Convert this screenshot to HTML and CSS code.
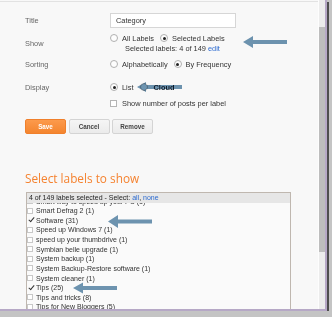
FILE: index.html
```html
<!DOCTYPE html>
<html lang="en">
<head>
  <meta charset="UTF-8" />
  <title>Labels gadget settings</title>
  <link rel="stylesheet" href="styles.css">
</head>
<body>

  <div class="window">
    <div class="main">
      <div class="settings">
        <div class="row row-title">
          <span class="lbl">Title</span>
          <input class="field" type="text" value="Category">
        </div>

        <div class="row row-show">
          <span class="lbl">Show</span>
          <div class="opts">
            <div class="line"><span class="radio"></span><span class="opt">All Labels</span><span class="radio on"></span><span>Selected Labels</span></div>
            <div class="line sub">Selected labels: 4 of 149&nbsp;<a href="#">edit</a></div>
          </div>
        </div>

        <div class="row row-sort">
          <span class="lbl">Sorting</span>
          <div class="line"><span class="radio"></span><span class="opt">Alphabetically</span><span class="radio on"></span><span>By Frequency</span></div>
        </div>

        <div class="row row-display">
          <span class="lbl">Display</span>
          <div class="line"><span class="radio on"></span><span class="opt">List</span><span class="radio"></span><span class="cloud">Cloud</span></div>
        </div>

        <div class="row row-count">
          <span class="lbl"></span>
          <div class="line"><span class="check"></span><span>Show number of posts per label</span></div>
        </div>

        <div class="buttons">
          <button class="btn btn-save">Save</button>
          <button class="btn">Cancel</button>
          <button class="btn">Remove</button>
        </div>
      </div>

      <h2 class="heading">Select labels to show</h2>

      <div class="labels">
        <div class="labels-head">4 of 149 labels selected - Select: <a href="#">all</a>, <a href="#">none</a></div>
        <div class="list-scroll">
          <ul class="label-list">
            <li><span class="box"></span>Smart way to speed up your PC (1)</li>
            <li><span class="box"></span>Smart Defrag 2 (1)</li>
            <li><span class="box ticked"></span>Software (31)</li>
            <li><span class="box"></span>Speed up Windows 7 (1)</li>
            <li><span class="box"></span>speed up your thumbdrive (1)</li>
            <li><span class="box"></span>Symbian belle upgrade (1)</li>
            <li><span class="box"></span>System backup (1)</li>
            <li><span class="box"></span>System Backup-Restore software (1)</li>
            <li><span class="box"></span>System cleaner (1)</li>
            <li><span class="box ticked"></span>Tips (25)</li>
            <li><span class="box"></span>Tips and tricks (8)</li>
            <li><span class="box"></span>Tips for New Bloggers (5)</li>
          </ul>
        </div>
      </div>
    </div>

    <div class="scrollbar"><div class="thumb"></div></div>

    <!-- callout arrows drawn over the screenshot -->
    <svg class="arrows" width="332" height="317" viewBox="0 0 332 317">
      <polygon points="243,42 253,36 253,40 287,40 287,44 253,44 253,48" />
      <polygon points="137,87 146,82 146,85 182,85 182,89 146,89 146,92" />
      <polygon points="108,221.5 118,215 118,219.5 152,219.5 152,223.5 118,223.5 118,228" />
      <polygon points="73,288 83,282.5 83,286 117,286 117,290 83,290 83,293.5" />
    </svg>
  </div>

</body>
</html>
```

FILE: styles.css
```css
body {
  margin: 0;
  background-color: #c4c4c4;
  font-family: "Liberation Sans", Arial, sans-serif;
  font-size: 7.4px;
  color: #333;
}

.window {
  position: relative;
  display: flex;
  width: 325px;
  height: 309px;
  overflow: hidden;
  background-color: #f8f8f8;
  border-right: 2px solid #b6a8c6;
  border-bottom: 2px solid #b6a8c6;
  box-shadow: 2px 2px 0 #4e4e4e;
}

.main {
  width: 318px;
  flex: none;
  margin-top: 1px;
  border-top: 1px solid #e2e2e2;
}

.settings {
  padding: 11px 0 0 25px;
}

.row {
  display: flex;
  align-items: center;
}

.lbl {
  width: 85px;
  flex: none;
  color: #666;
}

.row-title {
  height: 15px;
}

.field {
  width: 126px;
  height: 15px;
  box-sizing: border-box;
  margin: 0;
  padding: 0 0 0 5px;
  border: 1px solid #d6d6d6;
  background-color: white;
  font-family: "Liberation Sans", Arial, sans-serif;
  font-size: 7.4px;
  color: #333;
}

.row-show { margin-top: 5px; }
.row-sort { margin-top: 6px; }
.row-display { margin-top: 13px; }
.row-count { margin-top: 6px; }

.line {
  display: flex;
  align-items: center;
  height: 10px;
}

.sub {
  margin-left: 15px;
}

.sub a,
.labels-head a {
  color: #2d6bd0;
  text-decoration: none;
}

.radio {
  position: relative;
  width: 8px;
  height: 8px;
  box-sizing: border-box;
  margin-right: 4px;
  border: 1px solid #b0b0b0;
  border-radius: 50%;
  background-color: #fdfdfd;
}

.radio.on::after {
  content: "";
  position: absolute;
  left: 1.5px;
  top: 1.5px;
  width: 3px;
  height: 3px;
  border-radius: 50%;
  background-color: #222;
}

.opt {
  margin-right: 6px;
}

.cloud {
  margin-left: 2px;
  font-weight: bold;
  color: #1c2a38;
}

.check {
  width: 7px;
  height: 7px;
  box-sizing: border-box;
  margin-right: 5px;
  border: 1px solid #b4b4b4;
  background-color: white;
}

.buttons {
  display: flex;
  gap: 2.5px;
  margin-top: 11px;
}

.btn {
  width: 41px;
  height: 15px;
  padding: 0;
  border: 1px solid #d4d4d4;
  border-radius: 2px;
  background: linear-gradient(#f5f5f5, #ebebeb);
  font-family: "Liberation Sans", Arial, sans-serif;
  font-size: 6.3px;
  font-weight: bold;
  color: #444;
}

.btn-save {
  border-color: #f0802c;
  background: linear-gradient(#fc9a4c, #f4852f);
  color: white;
}

.heading {
  margin: 37px 0 0 25px;
  font-family: "Open Sans", sans-serif;
  font-size: 11.8px;
  font-weight: normal;
  line-height: 14px;
  color: #f5822f;
}

.labels {
  width: 265px;
  box-sizing: border-box;
  margin: 7px 0 0 26px;
  border: 1px solid #bfb7af;
  background-color: #fafafa;
  font-size: 7px;
}

.labels-head {
  height: 10px;
  line-height: 10px;
  padding-left: 2px;
  background-color: #e6e6e6;
  color: #222;
}

.list-scroll {
  height: 120px;
  overflow: hidden;
}

.label-list {
  list-style: none;
  margin: -6.8px 0 0;
  padding: 0;
}

.label-list li {
  display: flex;
  align-items: center;
  height: 9.63px;
}

.box {
  position: relative;
  width: 6px;
  height: 6px;
  box-sizing: border-box;
  margin-right: 3px;
  border: 1px solid #c8c8c8;
  background-color: white;
}

.box.ticked {
  border-color: transparent;
  background-color: transparent;
}

.box.ticked::after {
  content: "";
  position: absolute;
  left: 0;
  top: -2px;
  width: 2px;
  height: 5px;
  border-right: 1px solid #333;
  border-bottom: 1px solid #333;
  transform: translateX(2px) rotate(40deg);
}

.scrollbar {
  width: 6px;
  flex: none;
  border-left: 1px solid #fdfdfd;
  padding-top: 27px;
  background-color: #ececec;
}

.thumb {
  height: 225px;
  background-color: #bdbdbd;
}

.arrows {
  position: absolute;
  left: 0;
  top: 0;
  fill: #6f96b3;
  mix-blend-mode: multiply;
  pointer-events: none;
}
```
